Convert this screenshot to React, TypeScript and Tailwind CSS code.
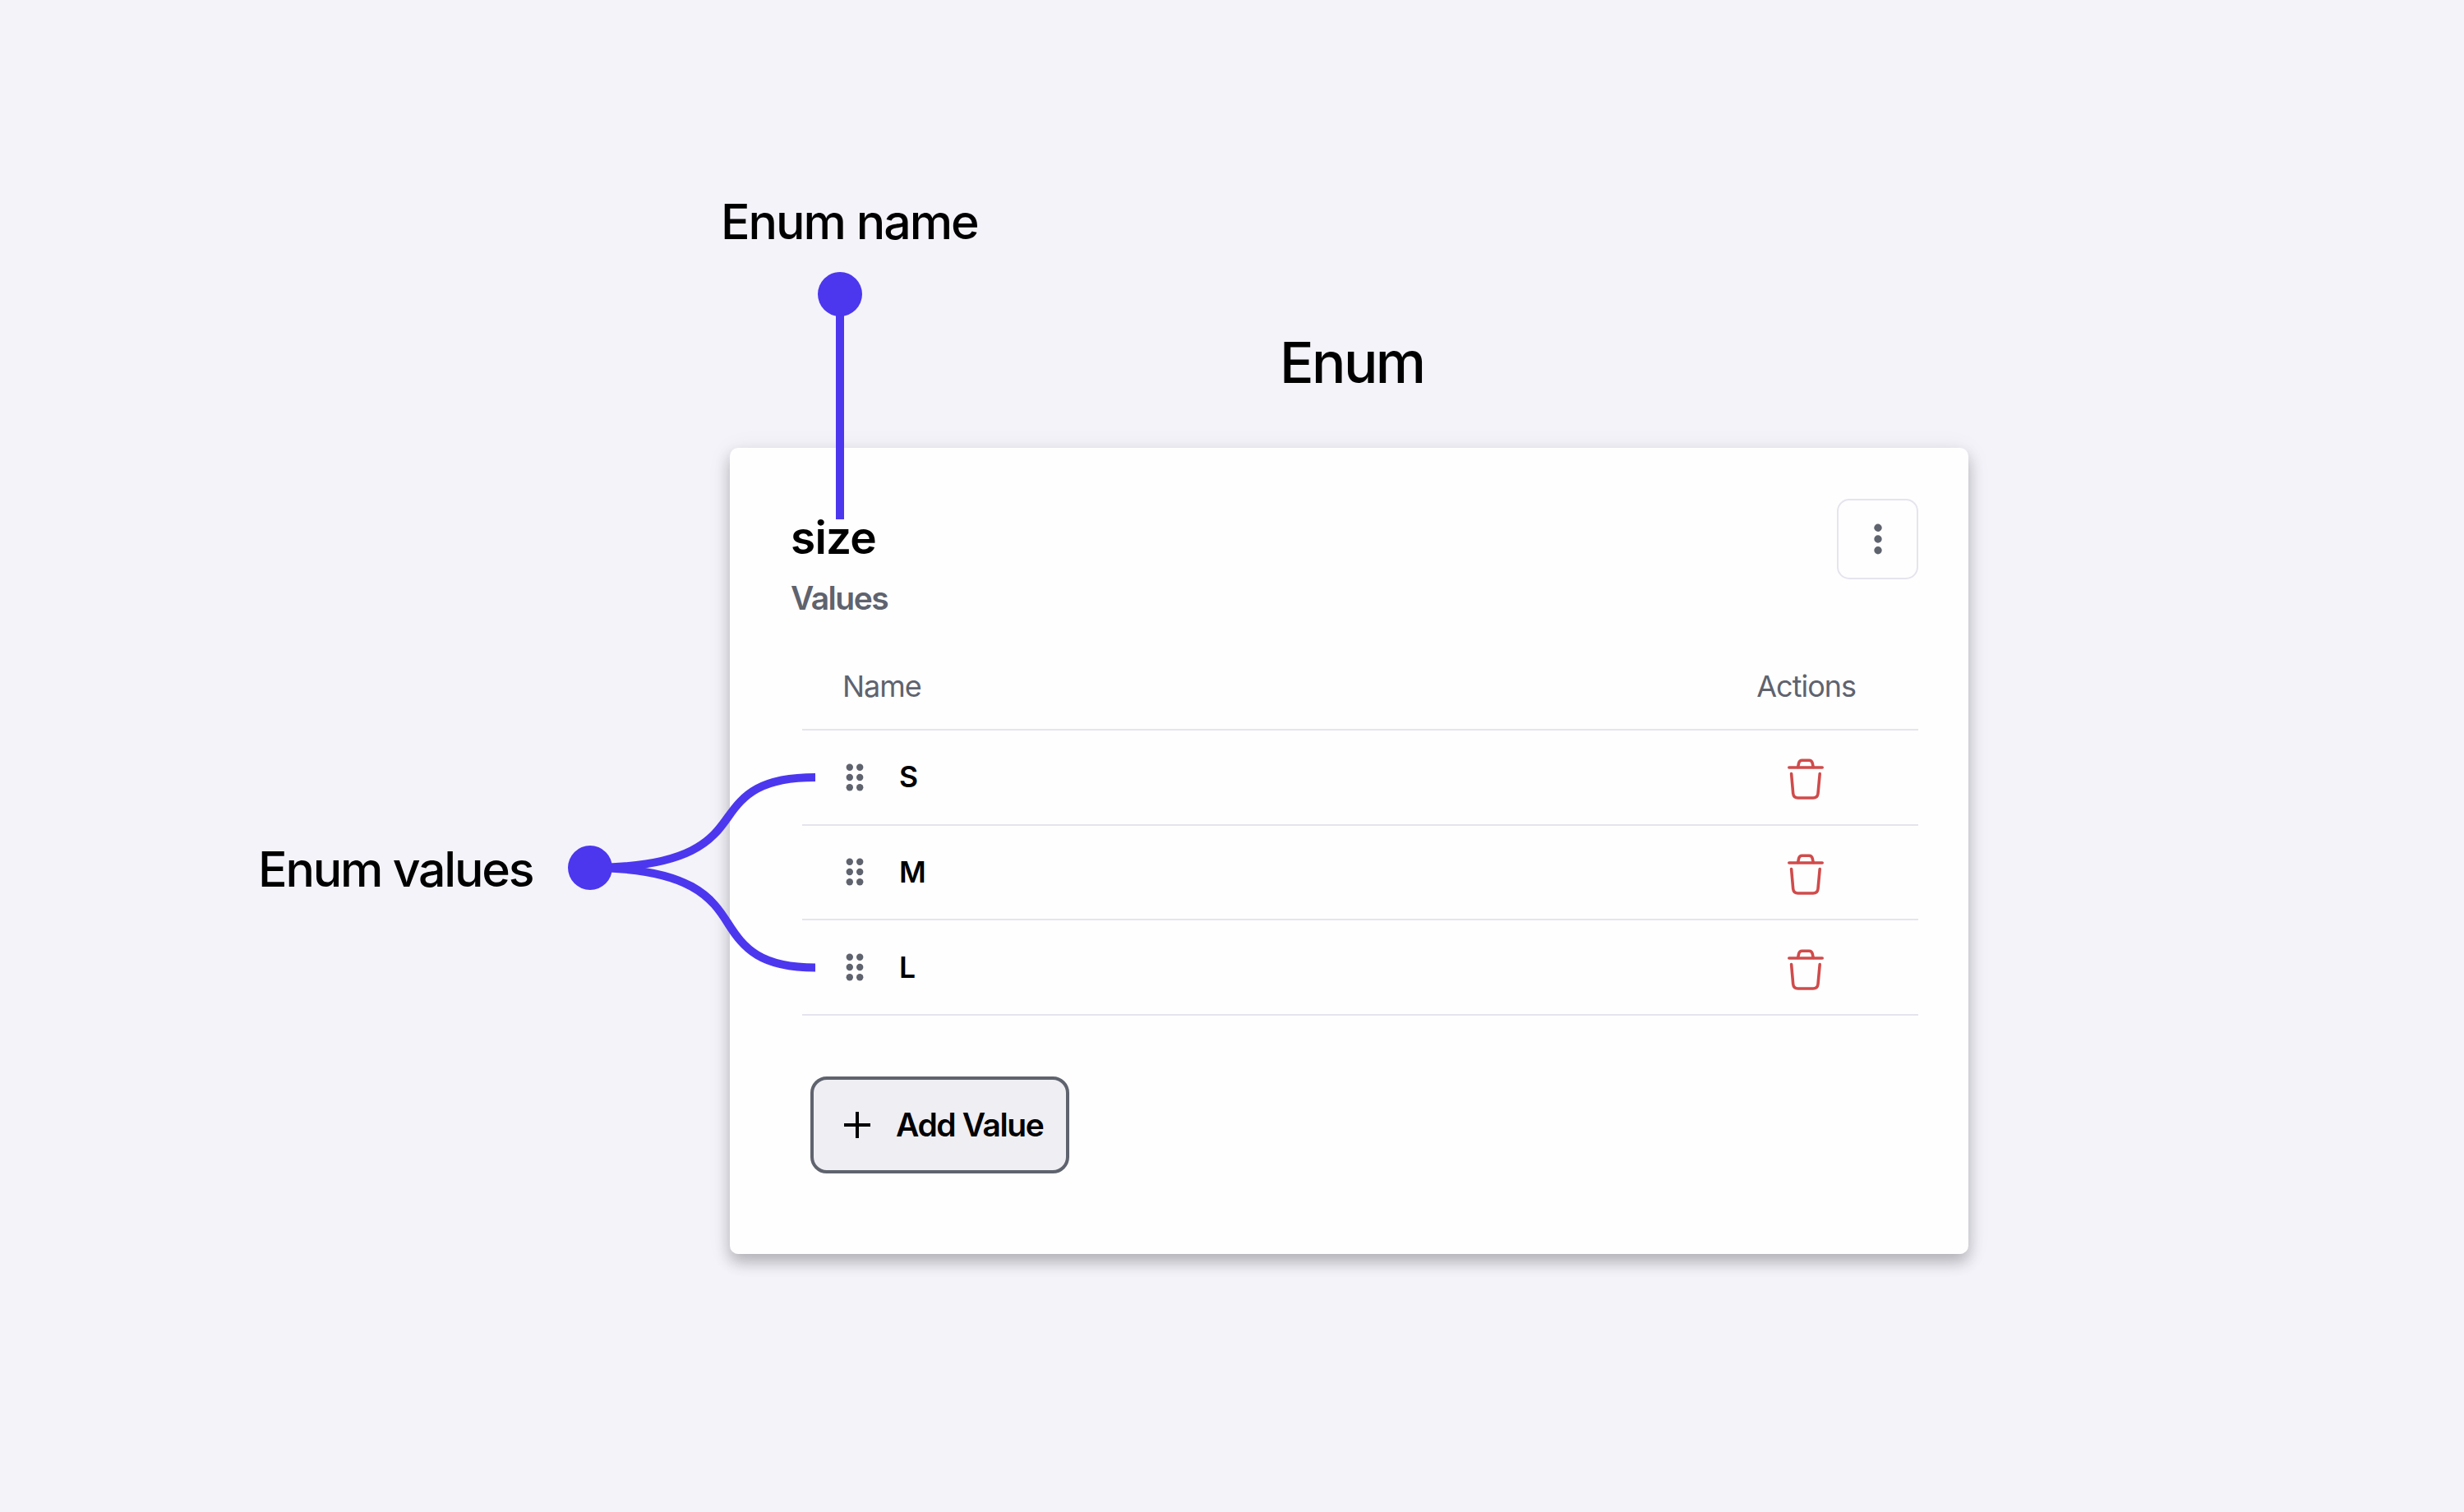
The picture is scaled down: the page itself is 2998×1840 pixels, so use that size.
const enumValues = ['S', 'M', 'L'];

function GripIcon() {
  return (
    <svg className="w-[22px] h-[34px]" viewBox="0 0 22 34" fill="#5f636e">
      {[4.7, 17, 29.3].map((cy) => (
        <g key={cy}>
          <circle cx="4.8" cy={cy} r="4.2" />
          <circle cx="17.2" cy={cy} r="4.2" />
        </g>
      ))}
    </svg>
  );
}

function KebabIcon() {
  return (
    <svg className="w-3 h-10" viewBox="0 0 12 40" fill="#5f636e">
      <circle cx="6" cy="6.3" r="4.7" />
      <circle cx="6" cy="20" r="4.7" />
      <circle cx="6" cy="33.7" r="4.7" />
    </svg>
  );
}

function TrashIcon() {
  return (
    <svg
      className="w-[46px] h-[52px]"
      viewBox="0 0 46 52"
      fill="none"
      stroke="#d04b4b"
      strokeWidth="3.6"
      strokeLinecap="round"
      strokeLinejoin="round"
    >
      <path d="M2.8 13H43.2" />
      <path d="M13.6 12.5L14.6 7.6Q15.4 4.2 18.6 4.2H27.2Q30.4 4.2 31.2 7.6L32.2 12.5" />
      <path d="M5.6 20.6L7.7 44.6Q8.3 50 13.6 50H32Q37.4 50 38 44.6L40.2 20.6" />
    </svg>
  );
}

function EnumCard() {
  return (
    <section className="w-[1507px] h-[981px] ml-[888px] mt-[64px] pt-[62px] pl-[74px] pr-[61px] bg-[#fefefe] rounded-[10px] shadow-[0_10px_18px_rgba(0,0,0,0.24),0_4px_30px_rgba(30,40,70,0.08)]">
      <header className="flex justify-between">
        <div className="pt-[15px]">
          <h2 className="text-[55px] leading-[64px] font-semibold tracking-[-0.8px] text-black">size</h2>
          <p className="mt-[18px] text-[39px] leading-[48px] font-semibold tracking-[-1.5px] text-[#5f636e]">Values</p>
        </div>
        <button className="flex items-center justify-center w-[99px] h-[98px] border-2 border-[#e5e4ee] rounded-[15px]">
          <KebabIcon />
        </button>
      </header>

      <div className="ml-[14px] mt-[31px]">
        <div className="flex items-center justify-between h-[106px] pl-[49px] pr-[76px] border-b-2 border-[#e5e4ee] text-[36px] tracking-[-1px] text-[#5f636e]">
          <span>Name</span>
          <span>Actions</span>
        </div>
        {enumValues.map((value) => (
          <div key={value} className="flex items-center h-[115.67px] pl-[53px] pr-[114px] border-b-2 border-[#e5e4ee]">
            <GripIcon />
            <span className="ml-[43px] text-[35.5px] font-semibold text-black">{value}</span>
            <button className="ml-auto pt-[3px]">
              <TrashIcon />
            </button>
          </div>
        ))}
      </div>

      <button className="flex items-center w-[315px] h-[118px] ml-[24px] mt-[74px] pl-[37px] bg-[#efeef3] border-4 border-[#5f636e] rounded-[20px] text-[39px] font-semibold tracking-[-1.4px] text-black whitespace-nowrap">
        <svg className="w-8 h-8 mr-[31px] shrink-0" viewBox="0 0 32 32" stroke="#000" strokeWidth="4">
          <path d="M16 0V32M0 16H32" />
        </svg>
        Add Value
      </button>
    </section>
  );
}

// Callout labels and their connector lines, drawn over the card
function Annotations() {
  return (
    <>
      <svg className="absolute left-0 top-0 w-[2998px] h-[1840px] pointer-events-none" viewBox="0 0 2998 1840" fill="none">
        <g stroke="#4c37ef" strokeWidth="10">
          <path d="M1022 358V632" />
          <path d="M718 1056C842 1056 867 1021 886 994S925 946 992 946" />
          <path d="M718 1056C842 1056 867 1094 886 1124S925 1177.5 992 1177.5" />
        </g>
        <circle cx="1022" cy="358" r="27" fill="#4c37ef" />
        <circle cx="718" cy="1056" r="27" fill="#4c37ef" />
      </svg>
      <p className="absolute left-[877px] top-[234px] text-[59px] leading-[72px] font-medium tracking-[-2px] whitespace-nowrap">Enum name</p>
      <p className="absolute left-[314px] top-[1022px] text-[59px] leading-[72px] font-medium tracking-[-2.2px] whitespace-nowrap">Enum values</p>
    </>
  );
}

export default function App() {
  return (
    <main className="relative w-[2998px] h-[1840px] pt-[401px] overflow-hidden bg-[#f4f3f9] text-black font-['Inter',sans-serif]">
      <h1 className="ml-[1557px] text-[69px] leading-[80px] font-medium tracking-[-2.6px]">Enum</h1>
      <EnumCard />
      <Annotations />
    </main>
  );
}
